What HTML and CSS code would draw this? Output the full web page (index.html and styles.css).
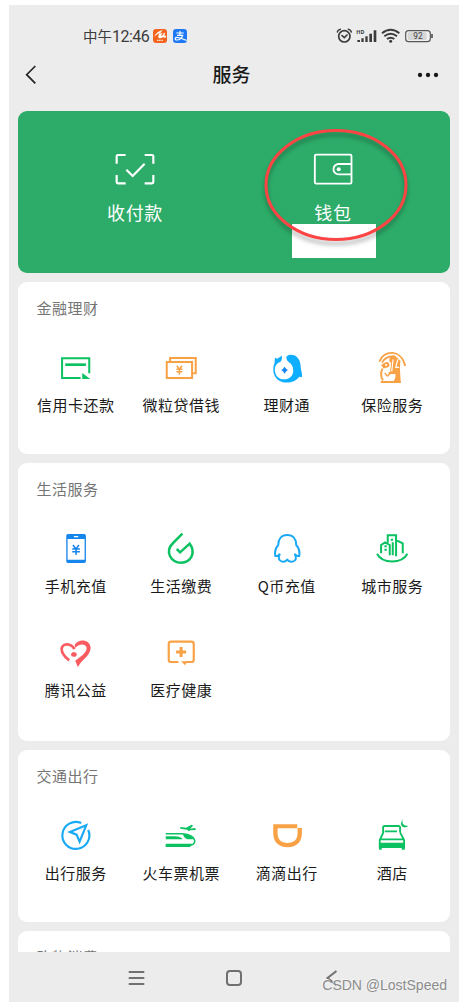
FILE: index.html
```html
<!DOCTYPE html>
<html lang="zh-CN">
<head>
<meta charset="utf-8">
<title>服务</title>
<link rel="stylesheet" href="styles.css">
</head>
<body>
<main class="phone">
  <header class="status">
    <span class="time">中午<span class="digits">12:46</span></span>
    <svg class="app" viewBox="0 0 42 42"><rect width="42" height="42" rx="9" fill="#f4631e"/><path d="M3 23C9 12 17 6 29 3L20 14L29 11L23 21L30 18L32 12L36 11L34 20L40 20L38 26L30 25L22 28C14 28 15 20 20 11C13 15 8 19 3 23Z" fill="#fff"/><path d="M12 34H30" stroke="#fff" stroke-width="4" stroke-dasharray="4 1" opacity=".75"/></svg>
    <svg class="app app-pay" viewBox="0 0 42 42"><rect width="42" height="42" rx="9" fill="#1f78f4"/><path d="M10 12H32M21 6V18M12 19H29C26 29 19 33 11 33C5 33 5 25 11 25C20 25 29 31 41 34" fill="none" stroke="#fff" stroke-width="3.6"/></svg>
    <svg class="signals" viewBox="345 84 294 48">
      <g fill="none" stroke="#3c3c3c" stroke-width="5" stroke-linecap="round"><circle cx="370" cy="109" r="17"/><path d="M363 107L370 113L378 105"/><path d="M349 96C350 91 354 89 358 88M391 96C390 91 386 89 382 88" stroke-width="4.5"/></g>
      <text x="406" y="102" class="hd">HD</text>
      <path d="M409 120H417V126H409ZM421 115H428V126H421ZM433 109H440V126H433ZM445 101H453V126H445ZM458 91H466V126H458Z" fill="#3c3c3c"/>
      <g fill="none" stroke="#3c3c3c" stroke-width="6"><path d="M483 100Q509 79 535 100M490 109Q509 94 528 109M498 117Q509 109 520 117"/></g><circle cx="509" cy="124" r="4.500" fill="#3c3c3c"/>
      <rect x="554" y="92" width="74" height="33" rx="9" fill="#f1f1f1" stroke="#555" stroke-width="3.5"/><rect x="560" y="97" width="57" height="23" rx="4" fill="#d6d6d6"/><path d="M633 102V114" stroke="#555" stroke-width="5"/>
      <text x="591" y="118" text-anchor="middle" class="charge">92</text>
    </svg>
  </header>
  <nav class="titlebar">
    <svg class="back" viewBox="75 195 36 60"><path d="M106 198L80 224L106 250" fill="none" stroke="#222" stroke-width="5"/></svg>
    <h1>服务</h1>
    <svg class="more" viewBox="0 0 66 18"><g fill="#181818"><circle cx="9" cy="9" r="6.500"/><circle cx="33" cy="9" r="6.500"/><circle cx="57" cy="9" r="6.500"/></g></svg>
  </nav>
  <div class="content">
    <section class="hero">
      <div class="hero-item">
        <svg class="hero-icon" viewBox="105 66 120 102"><path d="M110 101V79Q110 75 114 75H137M194 75H216Q220 75 220 79V101M220 135V156Q220 160 216 160H194M137 160H114Q110 160 110 156V135M139 119L158 138L194 101" fill="none" stroke="#fff" stroke-width="6.5"/></svg>
        <span>收付款</span>
      </div>
      <div class="hero-item">
        <svg class="hero-icon" viewBox="189 96 120 102"><g fill="none" stroke="#fff" stroke-width="5.5"><rect x="194.500" y="104" width="110" height="87" rx="4"/><path d="M304 132H266A15.500 15.500 0 0 0 266 163H304"/></g><circle cx="266" cy="148" r="6" fill="#fff"/></svg>
        <span>钱包</span>
      </div>
      <div class="mask"></div>
      <svg class="ring" viewBox="0 0 160 130"><ellipse cx="80" cy="65" rx="70" ry="54.500" fill="none" stroke="#fb4444" stroke-width="3"/></svg>
    </section>

    <section class="card">
      <h2>金融理财</h2>
      <div class="grid">
        <div class="item">
          <svg class="icon" viewBox="143.250 210 108 108"><path d="M237 280V234.500H155.500V294H211" fill="none" stroke="#0bc161" stroke-width="6"/><path d="M165 254H227" stroke="#0bc161" stroke-width="8"/><path d="M216 279L240 297H216Z" fill="#0bc161"/></svg>
          <span>信用卡还款</span>
        </div>
        <div class="item">
          <svg class="icon" viewBox="459.750 210 108 108"><g fill="none" stroke="#f8a145" stroke-width="6"><path d="M481 244V234H558V280H550"/><rect x="471" y="246" width="76" height="48"/><path d="M501 257L509 267L517 257M500 268H518M500 275H518M509 267V284" stroke-width="4.500"/></g></svg>
          <span>微粒贷借钱</span>
        </div>
        <div class="item">
          <svg class="icon" viewBox="101.250 210 108 108"><path d="M119 233L126 236L140 227C141 235 139 242 135 246C123 250 118 260 119 272C121 290 133 298 147 298C162 298 174 287 174 272C174 260 169 251 160 246C154 240 151 233 155 228C163 222 177 223 185 231C196 242 196 255 197 267C200 279 201 285 200 292L192 290C180 308 150 313 132 302C114 291 110 268 118 248Z" fill="#10aeff"/><path d="M148 260L153 267L158 270L153 274L148 281L143 274L138 270L143 267Z" fill="#1685f5"/></svg>
          <span>理财通</span>
        </div>
        <div class="item">
          <svg class="icon" viewBox="417.750 210 108 108"><g fill="none" stroke="#f8a145"><path d="M434 245C446 208 502 208 511 258" stroke-width="5.500"/><path d="M442 248C450 232 464 228 480 229" stroke-width="5.500"/><path d="M443 266C437 278 438 293 445 301" stroke-width="6"/><path d="M438 306H498" stroke-width="6"/></g><path d="M466 232L482 228L497 243C494 264 497 287 498 308H472C480 303 483 293 482 282H462V276H466L469 248C464 246 461 242 466 232Z" fill="#f8a145"/><path d="M439 255L450 248C458 243 465 248 464 257C462 264 451 262 447 266Z" fill="#f8a145"/><circle cx="454" cy="255" r="3" fill="#fff"/><path d="M475 238L471 274M489 238L483 262H493" stroke="#fff" stroke-width="3.500" fill="none"/><path d="M450 279L458 288L466 281" fill="none" stroke="#f8a145" stroke-width="4"/></svg>
          <span>保险服务</span>
        </div>
      </div>
    </section>

    <section class="card card-life">
      <h2>生活服务</h2>
      <div class="grid">
        <div class="item">
          <svg class="icon" viewBox="143.250 213 108 108"><path d="M173 222H222Q227 222 227 227V304Q227 309 222 309H173Q168 309 168 304V227Q168 222 173 222ZM172 237V299H223V237ZM191 228V232H204V228Z" fill="#1685ec" fill-rule="evenodd"/><path d="M188 255L197 267L206 255M186 267H209M186 275H209M197.500 267V285" fill="none" stroke="#1685ec" stroke-width="4.500"/></svg>
          <span>手机充值</span>
        </div>
        <div class="item">
          <svg class="icon" viewBox="459.750 213 108 108"><path d="M518 221L490 249C463 276 485 308 514 308C544 308 559 278 540 251L511 277L501 267" fill="none" stroke="#0bc161" stroke-width="7.500"/></svg>
          <span>生活缴费</span>
        </div>
        <div class="item">
          <svg class="icon" viewBox="101.250 213 108 108"><path d="M156 225C138 225 129 238 129 255C121 264 118 276 120 288L127 288L133 283C130 291 129 296 133 300C139 308 151 306 156 299C161 306 174 308 180 300C184 296 182 291 179 283L186 288L192 288C194 276 191 264 183 255C183 238 174 225 156 225Z" fill="none" stroke="#19a9f5" stroke-width="6" stroke-linejoin="round"/></svg>
          <span>Q币充值</span>
        </div>
        <div class="item">
          <svg class="icon" viewBox="417.750 213 108 108"><g fill="none" stroke="#0bc161" stroke-width="6"><path d="M427 281C443 312 501 312 518 281"/><path d="M439 280V255L451 247L465 255V286M459 248V226H484V247M474 247V286M484 289V240L504 250V280"/></g><path d="M449 256H456V262H449ZM449 266H456V272H449ZM468 236H475V242H468Z" fill="#0bc161"/></svg>
          <span>城市服务</span>
        </div>
        <div class="item">
          <svg class="icon" viewBox="143.250 45 108 108"><path d="M177 121C160 109 149 91 157 79C165 68 184 73 193 87" fill="none" stroke="#f95c60" stroke-width="8"/><path d="M193 75C201 61 221 57 233 67C249 81 239 103 222 117C212 126 207 134 203 142L195 122C209 111 231 97 229 83C226 70 207 70 196 83Z" fill="#f95c60"/><path d="M182 102L188 96L198 98L200 105L194 111L184 109Z" fill="#f95c60"/></svg>
          <span>腾讯公益</span>
        </div>
        <div class="item">
          <svg class="icon" viewBox="459.750 45 108 108"><path d="M506 126H484Q477 126 477 119V72Q477 65 484 65H545Q552 65 552 72V119Q552 126 545 126H528" fill="none" stroke="#f8a145" stroke-width="6.500"/><path d="M514 124H533L526 136Z" fill="#f8a145"/><path d="M499 96H529M514 81V111" stroke="#f8a145" stroke-width="9"/></svg>
          <span>医疗健康</span>
        </div>
      </div>
    </section>

    <section class="card">
      <h2>交通出行</h2>
      <div class="grid">
        <div class="item">
          <svg class="icon" viewBox="143.250 234 108 108"><path d="M213 249A40.500 40.500 0 1 0 234 270" fill="none" stroke="#19a9f5" stroke-width="6.500"/><path d="M228 256L179 276L199 284L208 305Z" fill="none" stroke="#19a9f5" stroke-width="6.500"/></svg>
          <span>出行服务</span>
        </div>
        <div class="item">
          <svg class="icon" viewBox="459.750 234 108 108"><path d="M468 281H518C540 282 555 292 555 304C555 312 545 316 536 317H468" fill="none" stroke="#0bc161" stroke-width="4.500"/><path d="M468 289H495C510 290 516 293 518 298H468ZM520 283C538 283 550 291 553 298H533C526 296 520 289 520 283ZM468 311H547L541 321H468ZM511 261L529 263L546 254L550 257L541 266L557 264L558 270L541 271L538 274L532 269L512 266Z" fill="#0bc161"/></svg>
          <span>火车票机票</span>
        </div>
        <div class="item">
          <svg class="icon" viewBox="101.250 234 108 108"><path d="M114 253H186V264H200V280C200 306 184 322 157 322C130 322 114 306 114 280ZM127 265V280C127 299 138 309 157 309C176 309 187 299 187 280V265Z" fill="#f8a145" fill-rule="evenodd"/></svg>
          <span>滴滴出行</span>
        </div>
        <div class="item">
          <svg class="icon" viewBox="417.750 234 108 108"><path d="M445 280V263Q445 258 450 258H491Q496 258 496 263V277M445 279L435 300V324M496 277L508 300V324M450 274H487M438 298H505" fill="none" stroke="#0bc161" stroke-width="5.500"/><path d="M433 308H510V329H501V324H441V329H433ZM507 237C498 245 505 260 520 257C513 267 497 261 499 248Q501 240 507 237Z" fill="#0bc161"/></svg>
          <span>酒店</span>
        </div>
      </div>
    </section>

    <section class="card"><h2>购物消费</h2></section>
  </div>
  <footer class="navbar">
    <svg viewBox="0 0 450 50"><g fill="none" stroke="#707070" stroke-width="2"><path d="M120.500 20H134.500M120.500 26H134.500M120.500 32H134.500" stroke-linecap="round"/><rect x="218" y="19" width="14" height="14" rx="3"/><path d="M327.500 19L318.500 26L327.500 33"/></g></svg>
    <span class="watermark">CSDN @LostSpeed</span>
  </footer>
</main>
</body>
</html>
```

FILE: styles.css
```css
* { box-sizing: border-box; }
body {
  margin: 0;
  padding: 5px 3px 0 9px;
  height: 1002px;
  overflow: hidden;
  background: #fff;
  color: #1a1a1a;
  font-family: "Noto Sans CJK SC", sans-serif;
}
svg { display: block; flex: none; }
h1, h2 { margin: 0; }
.phone {
  display: flex;
  flex-direction: column;
  height: 997px;
  background: #ececec;
}
.status {
  display: flex;
  align-items: center;
  height: 48px;
  padding: 14px 25px 0 74px;
  color: #3c3c3c;
}
.time { width: 70px; font-size: 14.5px; line-height: 20px; white-space: nowrap; }
.digits { font-family: Roboto, sans-serif; font-size: 16px; letter-spacing: -.5px; }
.app { width: 14px; height: 14px; }
.app-pay { margin-left: 6px; }
.signals { width: 98px; height: 16px; margin-left: auto; }
.hd { font: 700 16px "Noto Sans", sans-serif; fill: #3c3c3c; }
.charge { font: 400 25px Roboto, sans-serif; fill: #3c3c3c; }
.titlebar {
  display: flex;
  align-items: center;
  justify-content: space-between;
  height: 44px;
  padding: 0 20px 0 16px;
}
.back { width: 12px; height: 20px; }
h1 { font-size: 19px; font-weight: 500; line-height: 28px; margin: -2px 0 0 9px; }
.more { width: 22px; height: 6px; }
.content {
  flex: 1;
  min-height: 0;
  overflow: hidden;
  display: flex;
  flex-direction: column;
  gap: 9px;
  padding: 14px 9px 0;
}
.hero {
  position: relative;
  flex: none;
  height: 162px;
  padding: 41px 18px 0;
  display: grid;
  grid-template-columns: 1fr 1fr;
  border-radius: 9px;
  background: #2dac69;
  color: #fff;
}
.hero-item { display: flex; flex-direction: column; align-items: center; gap: 5px; }
.hero-icon { width: 40px; height: 34px; }
.hero-item span { font-size: 18px; line-height: 42px; letter-spacing: .7px; }
.mask { position: absolute; left: 274px; top: 113px; width: 84px; height: 34px; background: #fff; }
.ring {
  position: absolute;
  left: 237.500px;
  top: 9px;
  width: 160px;
  height: 130px;
  filter: drop-shadow(0 4px 2px rgba(0, 0, 0, .3));
}
.card {
  flex: none;
  height: 172px;
  padding: 16px 5px 0;
  border-radius: 9px;
  background: #fff;
}
.card-life { height: 278px; }
h2 {
  padding-left: 13.5px;
  font-size: 15px;
  font-weight: 400;
  line-height: 20px;
  letter-spacing: .5px;
  color: #757575;
}
.grid {
  display: grid;
  grid-template-columns: repeat(4, 1fr);
  row-gap: 39px;
  margin-top: 32px;
}
.item { display: flex; flex-direction: column; align-items: center; gap: 9px; }
.icon { width: 36px; height: 36px; }
.item span { font-size: 15px; line-height: 20px; letter-spacing: .5px; white-space: nowrap; }
.navbar { position: relative; flex: none; height: 50px; }
.navbar svg { width: 450px; height: 50px; }
.watermark {
  position: absolute;
  right: 12px;
  bottom: 8px;
  font: 14px/18px "Liberation Sans", Arial, sans-serif;
  color: #8c8c8c;
  text-shadow: -1px -1px 0 #f8f8f8;
}
```
